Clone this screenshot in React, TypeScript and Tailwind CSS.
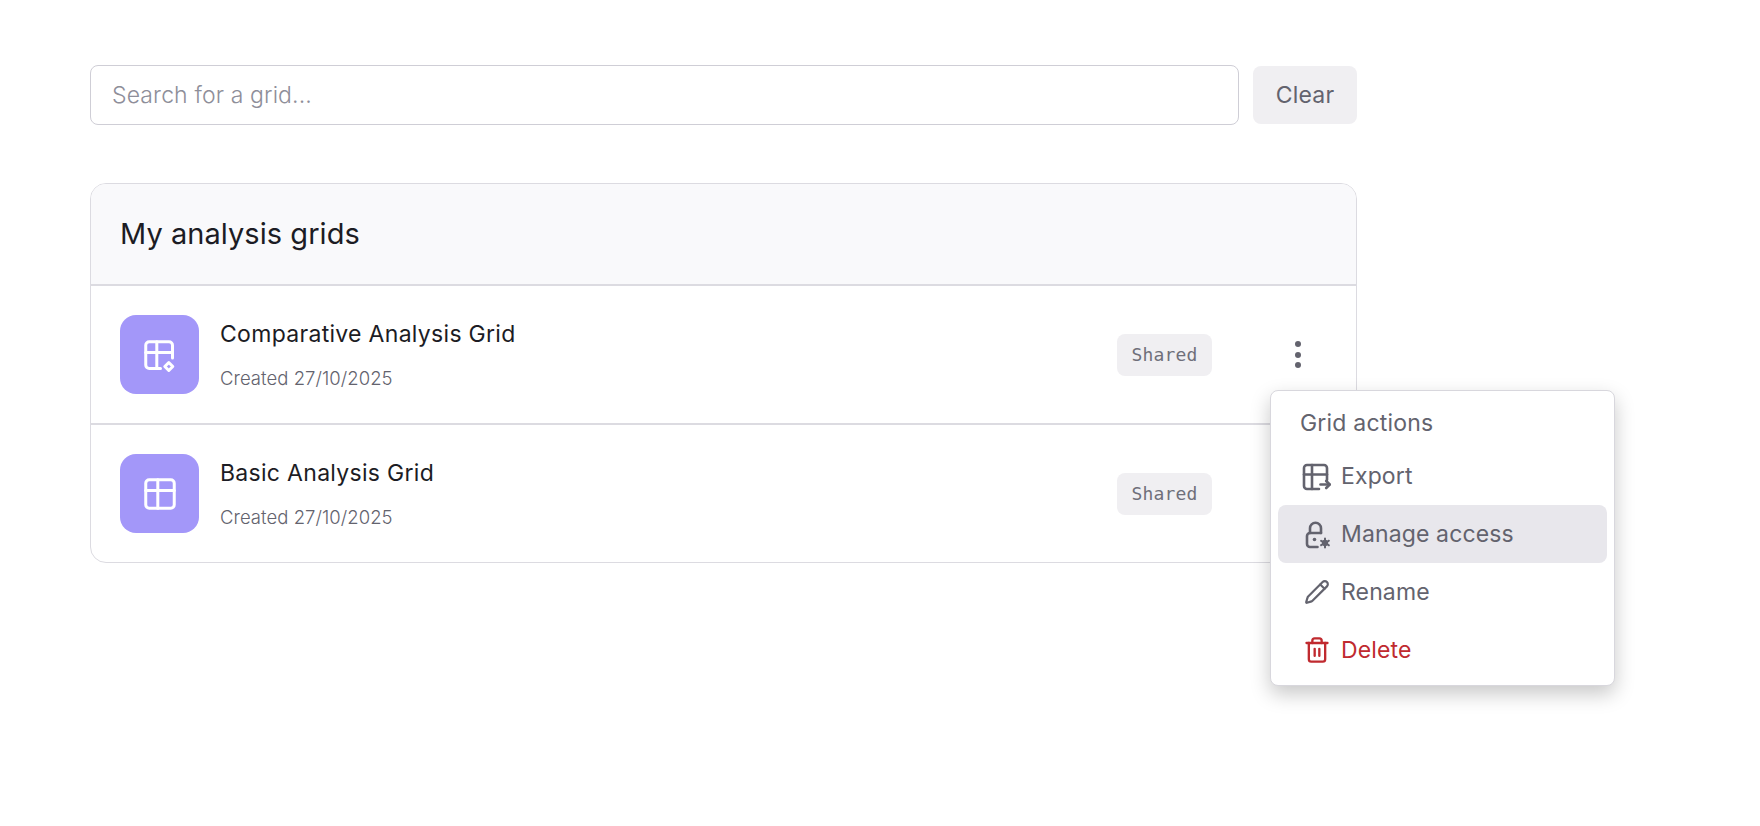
import type { ReactNode } from 'react'
import { Pencil, Trash2 } from 'lucide-react'

function GridIcon() {
  return (
    <svg width="36" height="36" viewBox="0 0 36 36" fill="none" stroke="currentColor" strokeWidth="3" strokeLinecap="round" strokeLinejoin="round">
      <rect x="3.75" y="3.75" width="28.5" height="28.5" rx="3.5" />
      <path d="M3.75 14.5h28.5" />
      <path d="M15.8 3.75v28.5" />
    </svg>
  )
}

function SparkGridIcon() {
  return (
    <svg width="36" height="36" viewBox="0 0 36 36" fill="none" stroke="currentColor" strokeWidth="3" strokeLinecap="round" strokeLinejoin="round">
      <path d="M30.5 21V8.2a3.5 3.5 0 0 0-3.5-3.5H7.25a3.5 3.5 0 0 0-3.5 3.5V28a3.5 3.5 0 0 0 3.5 3.5H18.5" />
      <path d="M3.75 15.4h26.75" />
      <path d="M14.8 4.7v26.8" />
      <path d="M26.8 25.5l4 4-4 4-4-4z" />
    </svg>
  )
}

function ExportIcon() {
  return (
    <svg width="30" height="30" viewBox="0 0 30 30" fill="none" stroke="currentColor" strokeWidth="2.6" strokeLinecap="round" strokeLinejoin="round">
      <path d="M25 19V7a3 3 0 0 0-3-3H5a3 3 0 0 0-3 3v18a3 3 0 0 0 3 3h12" />
      <path d="M2 13.5h23" />
      <path d="M10 4v24" />
      <path d="M18.5 23.5h9" />
      <path d="M24.2 20l3.5 3.5-3.5 3.5" />
    </svg>
  )
}

function LockGearIcon() {
  return (
    <svg width="30" height="30" viewBox="0 0 30 30" fill="none" stroke="currentColor" strokeWidth="2.6" strokeLinecap="round" strokeLinejoin="round">
      <path d="M15.5 28H8a3 3 0 0 1-3-3v-8a3 3 0 0 1 3-3h11" />
      <path d="M8 14V9.2a5.5 5.5 0 0 1 11 0V14" />
      <circle cx="12.5" cy="20.5" r="1.8" fill="currentColor" stroke="none" />
      <circle cx="23" cy="24" r="2.4" fill="currentColor" strokeWidth="1.5" />
      <path d="M23 19.5v1.2M23 27.3v1.2M19.1 21.8l1 .6M25.9 25.7l1 .6M19.1 26.2l1-.6M25.9 22.3l1-.6" strokeWidth="2" />
    </svg>
  )
}

function Row({ name, icon }: { name: string; icon: ReactNode }) {
  return (
    <div className="flex items-center py-[29px] pr-[29px] pl-[29px]">
      <div className="flex h-[79px] w-[79px] shrink-0 items-center justify-center rounded-2xl bg-[#a397f9] text-white">
        {icon}
      </div>
      <div className="ml-[21px] flex-1">
        <div className="text-[23px] leading-[30px] tracking-[0.3px] text-[#1c1c24]">{name}</div>
        <div className="mt-[17px] text-[18.5px] leading-[24px] font-light tracking-[0.05px] text-[#63636e]">Created 27/10/2025</div>
      </div>
      <span className="mr-[83px] flex h-[42px] w-[95px] items-center justify-center rounded-lg bg-[#f0eff2] font-['DejaVu_Sans_Mono',monospace] text-[18px] tracking-[0.2px] text-[#6f6f7a]">
        Shared
      </span>
      <div className="mr-[26px] flex flex-col gap-[4.5px]">
        <span className="h-[6px] w-[6px] rounded-full bg-[#63636e]" />
        <span className="h-[6px] w-[6px] rounded-full bg-[#63636e]" />
        <span className="h-[6px] w-[6px] rounded-full bg-[#63636e]" />
      </div>
    </div>
  )
}

function MenuItem({ label, icon, active, danger }: { label: string; icon: ReactNode; active?: boolean; danger?: boolean }) {
  return (
    <div className={`flex h-[58px] items-center gap-[9px] rounded-lg px-[24px] text-[23px] tracking-[0.13px] ${active ? 'bg-[#e8e7ec]' : ''} ${danger ? 'text-[#c02a2f]' : 'text-[#63636e]'}`}>
      <span className="flex w-[30px] shrink-0 justify-center">{icon}</span>
      {label}
    </div>
  )
}

export default function App() {
  return (
    <div className="min-h-[826px] bg-white pt-[65px] pl-[90px] font-['Inter',sans-serif]">
      <div className="relative w-[1267px]">
        <div className="flex items-center gap-[14px]">
          <input
            placeholder="Search for a grid..."
            className="h-[60px] flex-1 rounded-lg border border-[#cfced6] px-[21px] text-[23px] font-light tracking-[0.13px] placeholder:text-[#8e8e99]"
          />
          <button className="h-[58px] w-[104px] rounded-lg bg-[#f0eff2] text-[23px] tracking-[0.2px] text-[#63636e]">Clear</button>
        </div>

        <div className="mt-[58px] overflow-hidden rounded-2xl border border-[#dcdbe1]">
          <div className="flex h-[102px] items-center border-b-2 border-[#dcdbe1] bg-[#f9f9fb] px-[29px] text-[29px] tracking-[0.05px] text-[#1c1c24]">
            My analysis grids
          </div>
          <div className="divide-y-2 divide-[#dcdbe1]">
            <Row name="Comparative Analysis Grid" icon={<SparkGridIcon />} />
            <Row name="Basic Analysis Grid" icon={<GridIcon />} />
          </div>
        </div>

        <div className="absolute top-[325px] left-[1180px] w-[345px] rounded-lg border border-[#d8d7dd] bg-white px-[7px] pt-[8px] pb-[6px] shadow-[0_8px_20px_rgba(0,0,0,0.22)]">
          <div className="flex h-[48px] items-center px-[22px] text-[23px] tracking-[0.2px] text-[#63636e]">Grid actions</div>
          <MenuItem label="Export" icon={<ExportIcon />} />
          <MenuItem label="Manage access" icon={<LockGearIcon />} active />
          <MenuItem label="Rename" icon={<Pencil size={26} />} />
          <MenuItem label="Delete" icon={<Trash2 size={28} />} danger />
        </div>
      </div>
    </div>
  )
}
